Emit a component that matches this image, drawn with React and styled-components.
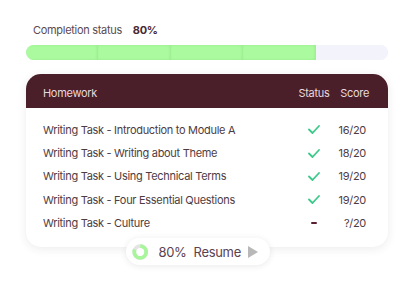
import React from 'react'
import styled, { createGlobalStyle } from 'styled-components'

const GlobalStyle = createGlobalStyle`
    body {
        margin: 0;
        background: #ffffff;
        font-family: Inter, "Liberation Sans", sans-serif;
        letter-spacing: -0.3px;
    }
`

const rows = [
    { title: 'Writing Task - Introduction to Module A', done: true, score: '16/20' },
    { title: 'Writing Task - Writing about Theme', done: true, score: '18/20' },
    { title: 'Writing Task - Using Technical Terms', done: true, score: '19/20' },
    { title: 'Writing Task - Four Essential Questions', done: true, score: '19/20' },
    { title: 'Writing Task - Culture', done: false, score: '?/20' },
]

const Check = () => (
    <svg width="12" height="9" viewBox="0 0 12 9">
        <polyline points="1,4.5 4.5,8 11,1" fill="none" stroke="#3cc98a" strokeWidth="1.8" strokeLinecap="round" strokeLinejoin="round" />
    </svg>
)

const Donut = ({ value }) => {
    const r = 8
    const c = 2 * Math.PI * r
    return (
        <svg width="22" height="22" viewBox="0 0 22 22">
            <circle cx="11" cy="11" r={r} fill="none" stroke="#e4e4e4" strokeWidth="5" />
            <circle cx="11" cy="11" r={r} fill="none" stroke="#a9f59b" strokeWidth="5"
                strokeDasharray={`${c * value} ${c}`} transform="rotate(-90 11 11)" />
        </svg>
    )
}

const App = () => {
    return (
        <Page>
            <GlobalStyle />
            <Label>
                Completion status <strong>80%</strong>
            </Label>
            <Bar>
                {[0, 1, 2, 3, 4].map(i => <Segment key={i} filled={i < 4} />)}
            </Bar>
            <Card>
                <Header>
                    <span>Homework</span>
                    <Center>Status</Center>
                    <Right>Score</Right>
                </Header>
                <Body>
                    {rows.map(row => (
                        <Row key={row.title}>
                            <span>{row.title}</span>
                            <Center>{row.done ? <Check /> : <Dash />}</Center>
                            <ScoreCell>{row.score}</ScoreCell>
                        </Row>
                    ))}
                </Body>
            </Card>
            <Pill>
                <Donut value={0.8} />
                <PillText>80%</PillText>
                <PillText>Resume</PillText>
                <Play />
            </Pill>
        </Page>
    )
}

export default App

const Page = styled.div`
    width: 400px;
    height: 300px;
    box-sizing: border-box;
    padding: 23px 12px 0 26px;
    display: flex;
    flex-direction: column;
`

const Label = styled.div`
    font-size: 11px;
    line-height: 14px;
    color: #5b4a50;
    padding-left: 7px;

    strong {
        margin-left: 8px;
        color: #4a2a34;
        font-weight: 700;
    }
`

const Bar = styled.div`
    margin-top: 8px;
    height: 15px;
    border-radius: 8px;
    overflow: hidden;
    display: flex;
    background: #f3f4fb;
`

const Segment = styled.div`
    flex: 1;
    background: ${p => (p.filled ? '#abfa9f' : '#f3f4fb')};
    box-shadow: ${p => (p.filled ? 'inset -1px 0 3px rgba(90, 160, 80, 0.18)' : 'none')};
`

const Card = styled.div`
    margin-top: 14px;
    height: 173px;
    border-radius: 15px;
    background: #ffffff;
    box-shadow: 0 2px 10px rgba(60, 40, 50, 0.09);
    overflow: hidden;
    display: flex;
    flex-direction: column;
`

const Header = styled.div`
    height: 34px;
    box-sizing: border-box;
    padding: 3px 19px 0 17px;
    background: #4b1f2a;
    color: #e6d9dd;
    font-size: 11px;
    display: grid;
    grid-template-columns: 1fr 32px 39px;
    align-items: center;
`

const Body = styled.div`
    padding: 10px 22px 0 17px;
    display: flex;
    flex-direction: column;
`

const Row = styled.div`
    height: 23.4px;
    display: grid;
    grid-template-columns: 1fr 32px 36px;
    align-items: center;
    font-size: 11px;
    color: #4e3c43;
`

const Center = styled.span`
    display: flex;
    justify-content: center;
    align-items: center;
`

const Right = styled.span`
    text-align: right;
`

const ScoreCell = styled.span`
    text-align: right;
`

const Dash = styled.span`
    width: 6px;
    height: 2px;
    background: #5a2030;
    border-radius: 1px;
`

const Pill = styled.div`
    align-self: flex-start;
    margin: -9px 0 0 100px;
    height: 27px;
    width: 144px;
    box-sizing: border-box;
    border-radius: 14px;
    background: #ffffff;
    box-shadow: 0 1px 6px rgba(60, 40, 50, 0.1);
    display: flex;
    align-items: center;
    padding: 0 12px 0 5px;
    gap: 7px;
    position: relative;

    svg {
        margin-right: 3px;
        margin-left: 1px;
    }
`

const PillText = styled.span`
    font-size: 13px;
    color: #5b4250;
`

const Play = styled.span`
    margin-left: auto;
    width: 0;
    height: 0;
    border-top: 6px solid transparent;
    border-bottom: 6px solid transparent;
    border-left: 10px solid #b8b8b8;
`
